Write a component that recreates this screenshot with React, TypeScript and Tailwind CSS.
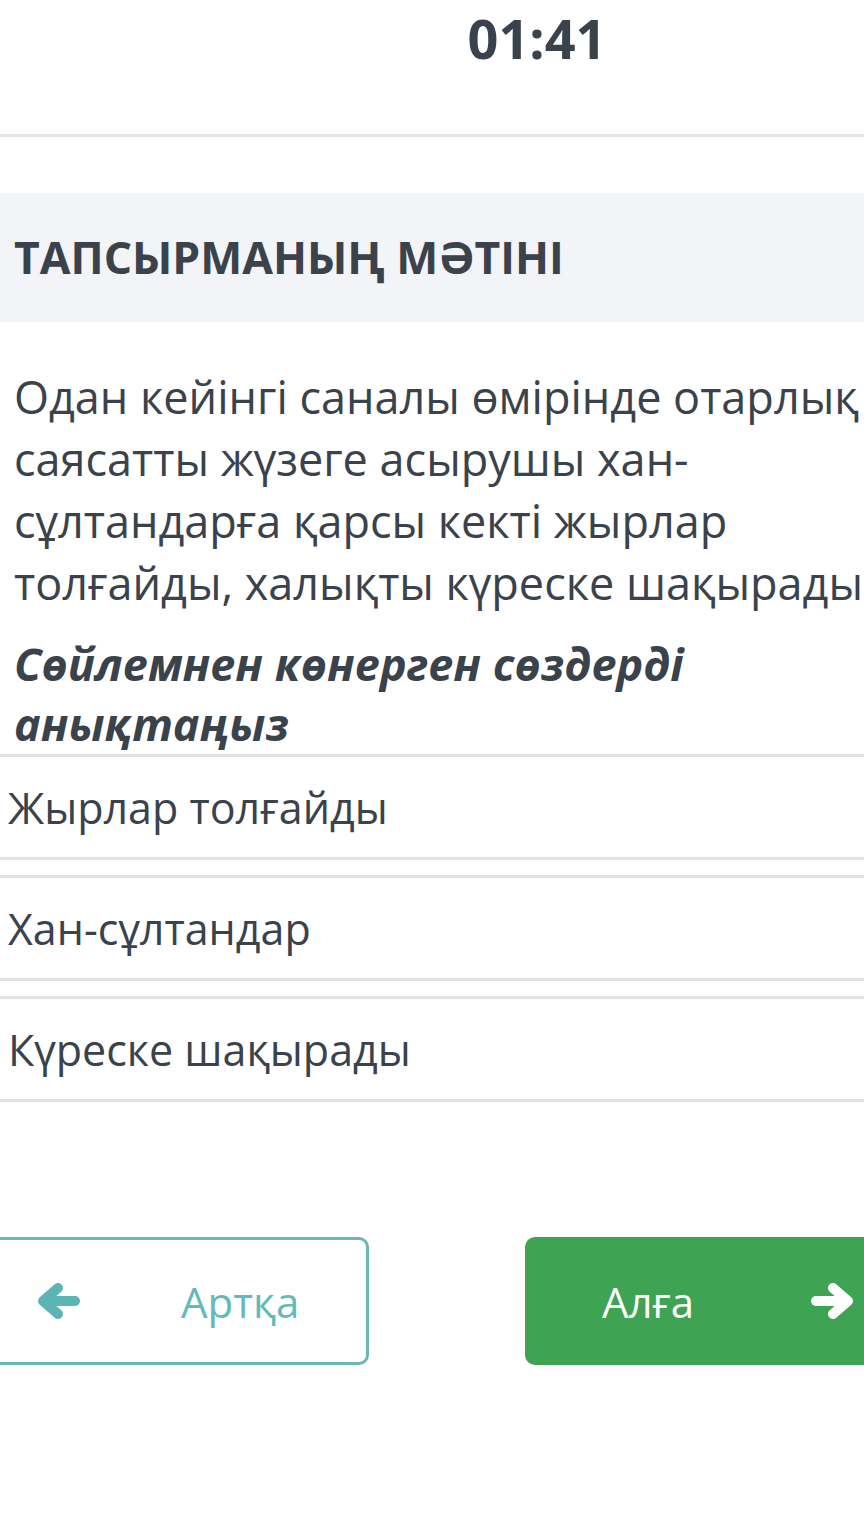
const options = ["Жырлар толғайды", "Хан-сұлтандар", "Күреске шақырады"];

function Arrow({ dir, className }: { dir: "left" | "right"; className?: string }) {
  return (
    <svg
      width="44"
      height="38"
      viewBox="0 0 44 38"
      fill="none"
      stroke="currentColor"
      strokeWidth="10"
      strokeLinecap="round"
      strokeLinejoin="round"
      className={className}
      style={{ transform: dir === "right" ? "scaleX(-1)" : undefined }}
    >
      <path d="M21 6 L6 19 L21 32" />
      <path d="M8 19 H38" />
    </svg>
  );
}

export default function App() {
  return (
    <div className="h-[1514px] w-[864px] overflow-hidden bg-white font-['Open_Sans',sans-serif] text-[#3a424b]">
      <header className="flex h-[137px] justify-center border-b-[3px] border-[#e3e5e7] pl-[210px] pt-[2px]">
        <span className="text-[54px] font-bold leading-[72px]">01:41</span>
      </header>

      <section className="mt-[56px] flex h-[129px] items-center bg-[#f2f4f7] px-[14px]">
        <h2 className="whitespace-nowrap text-[44.5px] font-bold leading-none">ТАПСЫРМАНЫҢ МӘТІНІ</h2>
      </section>

      <div className="w-[918px] px-[14px] pt-[44px]">
        <p className="text-[45px] leading-[62px]">
          Одан кейінгі саналы өмірінде отарлық саясатты жүзеге асырушы хан-сұлтандарға қарсы кекті жырлар толғайды, халықты күреске шақырады.
        </p>
        <p className="mt-[20px] w-[760px] text-[45px] font-bold italic leading-[60px]">Сөйлемнен көнерген сөздерді анықтаңыз</p>
      </div>

      <ul className="flex flex-col gap-[15px]">
        {options.map((option) => (
          <li
            key={option}
            className="flex h-[106px] items-center border-y-[3px] border-[#dfe3e6] px-[8px] text-[43px] leading-none"
          >
            {option}
          </li>
        ))}
      </ul>

      <div className="mt-[135px] flex justify-between">
        <button className="-ml-[10px] flex h-[128px] w-[379px] items-center rounded-[10px] border-[3px] border-[#6db5b8] pl-[44px] text-[#62bbbb]">
          <Arrow dir="left" className="text-[#5ab5b3]" />
          <span className="ml-[100px] text-[42px]">Артқа</span>
        </button>
        <button className="-mr-[10px] flex h-[128px] w-[349px] items-center rounded-[10px] bg-[#3ea352] pl-[77px] text-white">
          <span className="text-[42px]">Алға</span>
          <Arrow dir="right" className="ml-[116px]" />
        </button>
      </div>
    </div>
  );
}
